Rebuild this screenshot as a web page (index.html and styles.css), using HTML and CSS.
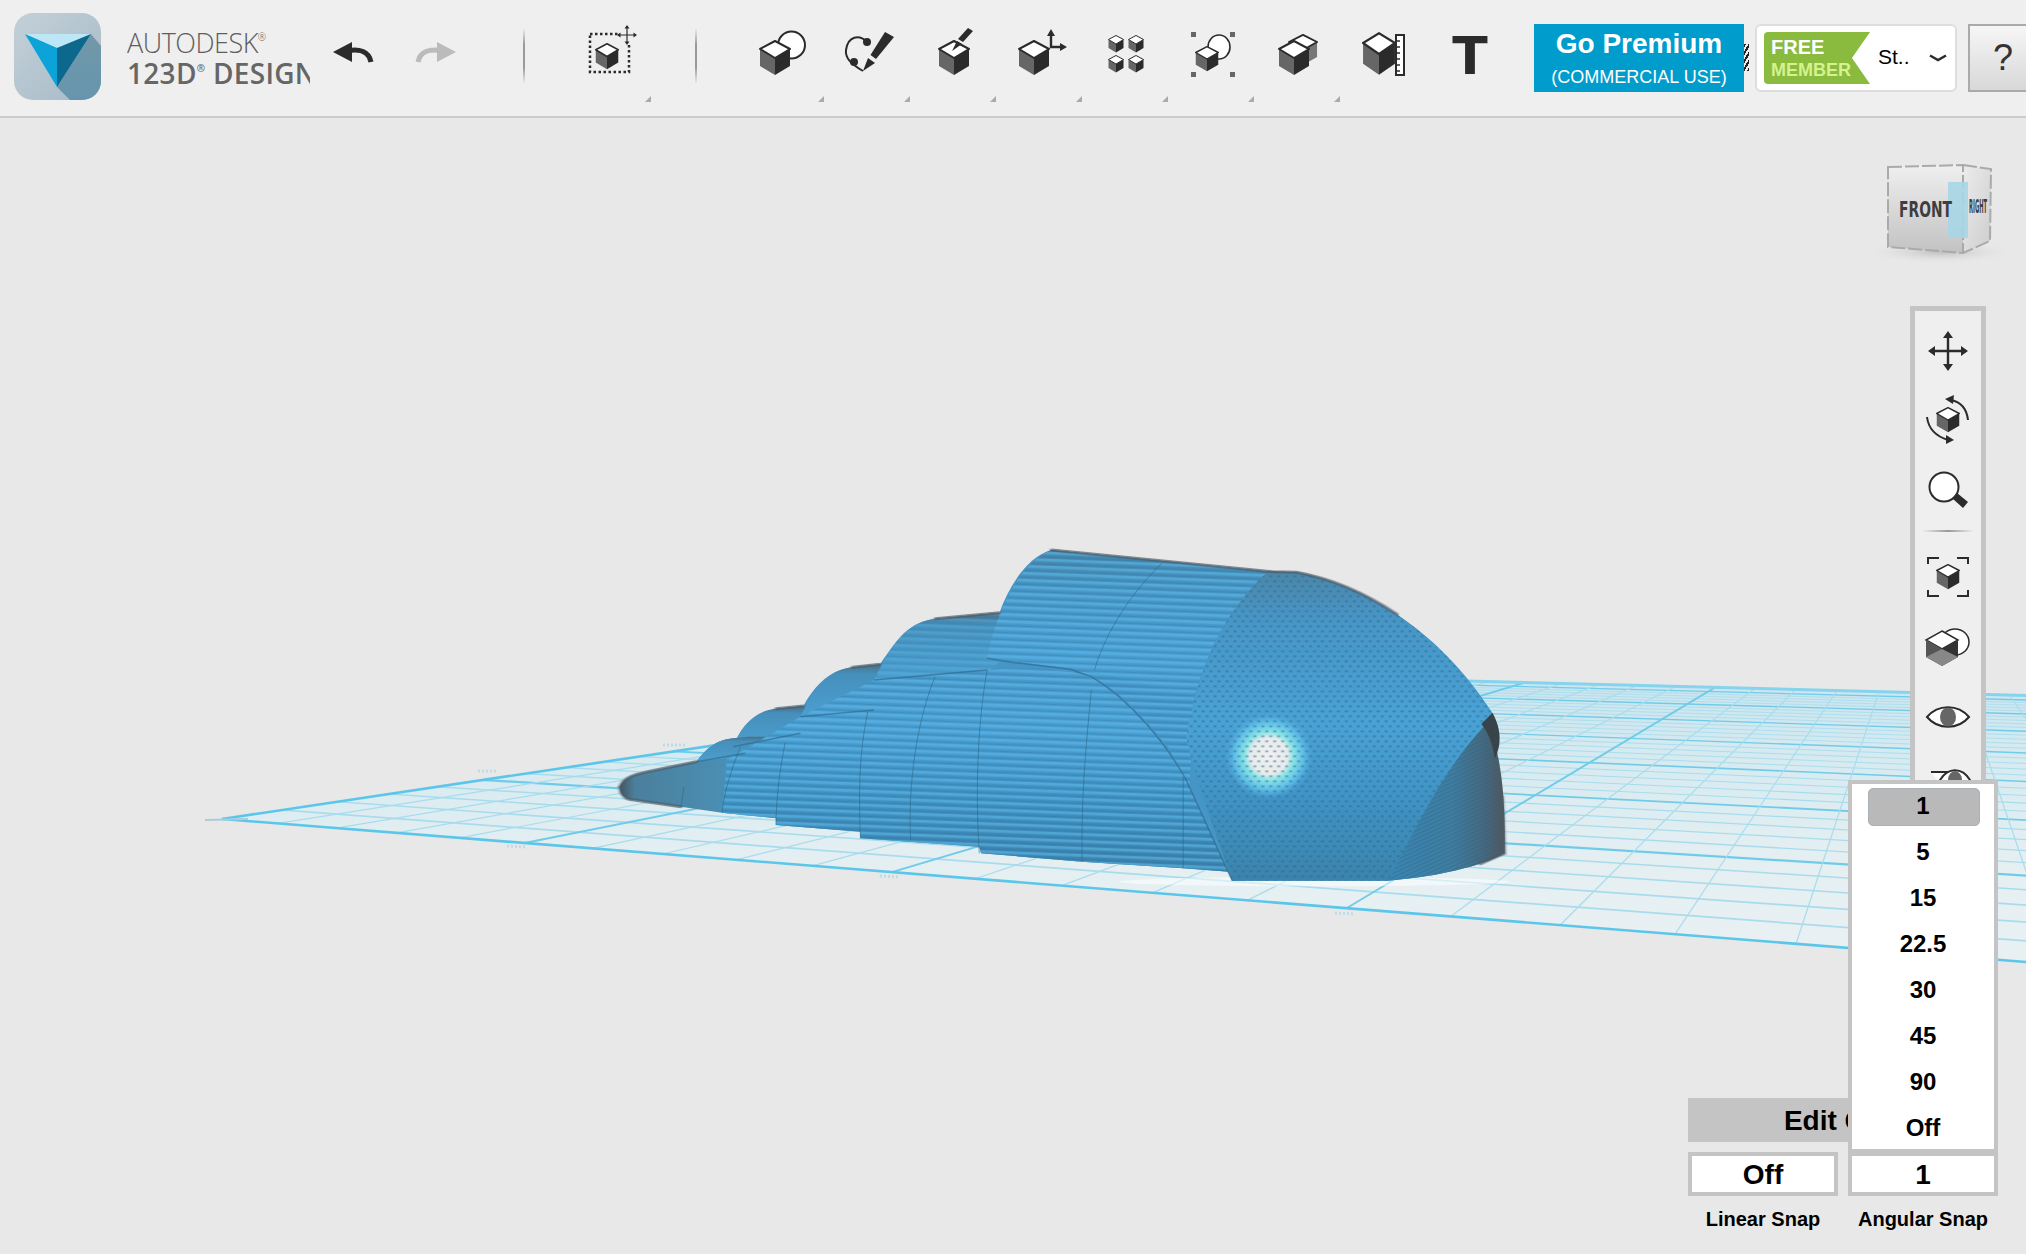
FILE: index.html
```html
<!DOCTYPE html>
<html lang="en">
<head>
<meta charset="utf-8">
<title>Autodesk 123D Design</title>
<link rel="stylesheet" href="styles.css">
</head>
<body>
<svg class="defs" width="0" height="0" aria-hidden="true">
  <defs>
    <symbol id="cube" viewBox="0 0 32 36" preserveAspectRatio="none">
      <polygon points="1,9 16,18 16,35 1,26" fill="#666"/>
      <polygon points="31,9 16,18 16,35 31,26" fill="#2b2b2b"/>
      <polygon points="16,1 31,9 16,18 1,9" fill="#fff" stroke="#2b2b2b" stroke-width="2" stroke-linejoin="round"/>
    </symbol>
    <symbol id="cube-back" viewBox="0 0 32 36" preserveAspectRatio="none">
      <polygon points="1,9 16,18 16,35 1,26" fill="#666"/>
      <polygon points="31,9 16,18 16,35 31,26" fill="#777"/>
      <polygon points="16,1 31,9 16,18 1,9" fill="#fff" stroke="#2b2b2b" stroke-width="2" stroke-linejoin="round"/>
    </symbol>
    <symbol id="cross" viewBox="0 0 40 40">
      <path d="M20 3V37M3 20H37" stroke="#2b2b2b" stroke-width="2.4" fill="none"/>
      <path d="M20 0l-5 7h10zM20 40l-5-7h10zM0 20l7-5v10zM40 20l-7-5v10z" fill="#2b2b2b"/>
    </symbol>
  </defs>
</svg>

<header class="toolbar">
  <svg class="logo" viewBox="0 0 87 87">
    <defs>
      <linearGradient id="logoBg" x1="0" y1="0" x2="1" y2="1">
        <stop offset="0" stop-color="#c3d0d8"/><stop offset="1" stop-color="#a6bac7"/>
      </linearGradient>
      <linearGradient id="logoShade" x1="0" y1="0" x2="0" y2="1">
        <stop offset="0" stop-color="#7398a9"/><stop offset="1" stop-color="#6595ad"/>
      </linearGradient>
      <clipPath id="logoClip"><rect width="87" height="87" rx="19"/></clipPath>
    </defs>
    <rect width="87" height="87" rx="19" fill="url(#logoBg)"/>
    <polygon clip-path="url(#logoClip)" points="77,21 87,33 87,87 56,87 43,74" fill="url(#logoShade)"/>
    <polygon points="11,21 77,21 43,35" fill="#bde6f6"/>
    <polygon points="11,21 43,35 43,74" fill="#0ba3d8"/>
    <polygon points="77,21 43,35 43,74" fill="#0c688c"/>
  </svg>
  <div class="brand">
    <div class="brand-top">AUTODESK<sup>®</sup></div>
    <div class="brand-bottom">123D<sup>®</sup> DESIGN</div>
  </div>

  <button class="hist hist-undo" aria-label="Undo">
    <svg width="44" height="24" viewBox="0 0 44 24"><polygon points="2,12 21,2 21,22" fill="#2b2b2b"/><path d="M18 10.5C28 9 38 11 40 22" stroke="#2b2b2b" stroke-width="5" fill="none"/></svg>
  </button>
  <button class="hist hist-redo" aria-label="Redo">
    <svg class="flip" width="44" height="24" viewBox="0 0 44 24"><polygon points="2,12 21,2 21,22" fill="#bbb"/><path d="M18 10.5C28 9 38 11 40 22" stroke="#bbb" stroke-width="5" fill="none"/></svg>
  </button>
  <span class="sep sep-a"></span>

  <button class="tool tool-select" aria-label="Transform">
    <svg class="tool-icon" viewBox="0 0 70 64">
      <rect x="16" y="10" width="39" height="38" fill="none" stroke="#2b2b2b" stroke-width="2.5" stroke-dasharray="2.5 2.5"/>
      <use href="#cube" x="21" y="19" width="24" height="27"/>
      <rect x="44" y="3" width="18" height="17" fill="#efefef"/>
      <use href="#cross" x="43" y="1" width="20" height="20"/>
    </svg>
    <i class="corner"></i>
  </button>
  <span class="sep sep-b"></span>

  <button class="tool tool-first" aria-label="Primitives">
    <svg class="tool-icon" viewBox="0 0 70 64">
      <ellipse cx="44.5" cy="21" rx="13.5" ry="13.5" fill="#fff" stroke="#2b2b2b" stroke-width="2"/>
      <use href="#cube" x="12" y="16" width="32" height="36"/>
    </svg>
    <i class="corner"></i>
  </button>
  <button class="tool" aria-label="Sketch">
    <svg class="tool-icon" viewBox="0 0 70 64">
      <path d="M34 18C26 10 15 12 13 26C12 34 18 40 30 47" fill="none" stroke="#2b2b2b" stroke-width="2"/>
      <circle cx="34" cy="18" r="4" fill="#2b2b2b"/><circle cx="21" cy="38" r="4" fill="#2b2b2b"/>
      <polygon points="52,8 61,13 43,35 37.500,31" fill="#2b2b2b"/>
      <polygon points="35,34 42,39 30,47" fill="#2b2b2b"/>
    </svg>
    <i class="corner"></i>
  </button>
  <button class="tool" aria-label="Construct">
    <svg class="tool-icon" viewBox="0 0 70 64">
      <use href="#cube" x="19" y="16" width="32" height="36"/>
      <polygon points="49,4 54,7 44,18 39,15" fill="#2b2b2b"/>
      <polygon points="38,17 43,20 33,27" fill="#2b2b2b"/>
    </svg>
    <i class="corner"></i>
  </button>
  <button class="tool" aria-label="Modify">
    <svg class="tool-icon" viewBox="0 0 70 64">
      <use href="#cube" x="13" y="16" width="32" height="36"/>
      <path d="M46 10V23H56" fill="none" stroke="#2b2b2b" stroke-width="2.4"/>
      <polygon points="46,5 42,12 50,12" fill="#2b2b2b"/>
      <polygon points="62,23 55,19 55,27" fill="#2b2b2b"/>
    </svg>
    <i class="corner"></i>
  </button>
  <button class="tool" aria-label="Pattern">
    <svg class="tool-icon" viewBox="0 0 70 64">
      <use href="#cube" x="17" y="11" width="16" height="18"/>
      <use href="#cube" x="37" y="11" width="16" height="18"/>
      <use href="#cube" x="17" y="31" width="16" height="18"/>
      <use href="#cube" x="37" y="31" width="16" height="18"/>
    </svg>
    <i class="corner"></i>
  </button>
  <button class="tool" aria-label="Group">
    <svg class="tool-icon" viewBox="0 0 70 64">
      <ellipse cx="42" cy="23" rx="11" ry="12" fill="#fff" stroke="#2b2b2b" stroke-width="1.6"/>
      <use href="#cube" x="18" y="22" width="24" height="26"/>
      <rect x="14" y="8" width="5" height="5" fill="#666"/><rect x="53" y="8" width="5" height="5" fill="#666"/>
      <rect x="14" y="48" width="5" height="5" fill="#666"/><rect x="53" y="48" width="5" height="5" fill="#666"/>
    </svg>
    <i class="corner"></i>
  </button>
  <button class="tool" aria-label="Combine">
    <svg class="tool-icon" viewBox="0 0 70 64">
      <use href="#cube-back" x="25" y="10" width="30" height="32"/>
      <use href="#cube" x="15" y="16" width="32" height="36"/>
    </svg>
    <i class="corner"></i>
  </button>
  <button class="tool" aria-label="Measure">
    <svg class="tool-icon" viewBox="0 0 70 64">
      <use href="#cube" x="13" y="8" width="34" height="44"/>
      <rect x="47" y="11" width="8" height="40" fill="#fff" stroke="#2b2b2b" stroke-width="2"/>
      <path d="M47 17h4M47 23h4M47 29h4M47 35h4M47 41h4M47 47h4" stroke="#2b2b2b" stroke-width="1.600"/>
    </svg>
  </button>
  <div class="tool tool-text">T</div>

  <a class="premium">
    <span class="premium-main">Go Premium</span>
    <span class="premium-sub">(COMMERCIAL USE)</span>
  </a>
  <span class="hatch"></span>
  <div class="member">
    <div class="ribbon"><span class="ribbon-free">FREE</span><span class="ribbon-member">MEMBER</span></div>
    <span class="member-name">St..</span>
    <svg class="chevron" width="18" height="8" viewBox="0 0 18 8"><path d="M1 1.500L9 6L17 1.500" fill="none" stroke="#2b2b2b" stroke-width="2.500"/></svg>
  </div>
  <button class="help">?</button>
</header>

<main class="stage">
  <svg class="scene" viewBox="0 118 2026 1136">
    <defs>
      <clipPath id="planeClip"><polygon points="222,819 1191,674 2026,695.400 2026,962"/></clipPath>
      <linearGradient id="planeFill" gradientUnits="userSpaceOnUse" x1="0" y1="680" x2="0" y2="940">
        <stop offset="0" stop-color="#cbe5ef"/><stop offset=".35" stop-color="#d8ebf1"/><stop offset=".7" stop-color="#e5eff2"/><stop offset="1" stop-color="#e8f0f2"/>
      </linearGradient>

      <linearGradient id="noseFill" x1="0" y1="0" x2="1" y2="0">
        <stop offset="0" stop-color="#45555f"/><stop offset=".14" stop-color="#4b7f9c"/><stop offset="1" stop-color="#4a8fb4"/>
      </linearGradient>
      <linearGradient id="bumpFill" x1="0" y1="0" x2="0" y2="1">
        <stop offset="0" stop-color="#4a6f86"/><stop offset=".18" stop-color="#468fbb"/><stop offset="1" stop-color="#4b9fd0"/>
      </linearGradient>
      <linearGradient id="bandFill" x1="0" y1="0" x2="0" y2="1">
        <stop offset="0" stop-color="#4485ab"/><stop offset=".25" stop-color="#4795c3"/><stop offset=".7" stop-color="#4a9fd2"/><stop offset="1" stop-color="#4595c6"/>
      </linearGradient>
      <linearGradient id="frontFill" gradientUnits="userSpaceOnUse" x1="0" y1="440" x2="0" y2="1080">
        <stop offset="0" stop-color="#4898c8"/><stop offset=".28" stop-color="#4a9fd2"/><stop offset=".6" stop-color="#4092c2"/><stop offset="1" stop-color="#3b80a9"/>
      </linearGradient>
      <linearGradient id="domeFill" x1="0" y1="0" x2="0" y2="1">
        <stop offset="0" stop-color="#4b86a8"/><stop offset=".15" stop-color="#4795c5"/><stop offset=".5" stop-color="#49a2d6"/><stop offset=".75" stop-color="#3f92c3"/><stop offset="1" stop-color="#3b84ad"/>
      </linearGradient>
      <linearGradient id="wedgeFill" x1="0" y1="0" x2="1" y2="0">
        <stop offset="0" stop-color="#3a86b3"/><stop offset=".55" stop-color="#3f7da0"/><stop offset=".85" stop-color="#46667a"/><stop offset="1" stop-color="#53565a"/>
      </linearGradient>
      <radialGradient id="spot">
        <stop offset="0" stop-color="#f0f0f0"/><stop offset=".42" stop-color="#e8ebeb"/><stop offset=".56" stop-color="#86e3e6"/><stop offset=".78" stop-color="#5fbfe6"/><stop offset="1" stop-color="#4fa8dc" stop-opacity="0"/>
      </radialGradient>
      <radialGradient id="cubeShadow">
        <stop offset="0" stop-color="#bbb" stop-opacity=".9"/><stop offset="1" stop-color="#e8e8e8" stop-opacity="0"/>
      </radialGradient>
      <linearGradient id="cubeFace" x1="0" y1="0" x2="0" y2="1">
        <stop offset="0" stop-color="#efefef"/><stop offset="1" stop-color="#c2c2c2"/>
      </linearGradient>
      <linearGradient id="cubeSide" x1="0" y1="0" x2="1" y2="1">
        <stop offset="0" stop-color="#ececec"/><stop offset="1" stop-color="#cdcdcd"/>
      </linearGradient>

      <pattern id="stripes" patternUnits="userSpaceOnUse" width="400" height="21" patternTransform="skewY(4)">
        <rect y="0" width="400" height="8" fill="#5cb8e8" fill-opacity=".6"/>
        <rect y="14" width="400" height="4" fill="#2c6f99" fill-opacity=".3"/>
      </pattern>
      <pattern id="dots" patternUnits="userSpaceOnUse" width="13" height="30">
        <rect x="1" y="1" width="5" height="6" fill="#2b6486" fill-opacity=".48"/>
        <rect x="7.500" y="16" width="5" height="6" fill="#2b6486" fill-opacity=".48"/>
      </pattern>
      <pattern id="diag" patternUnits="userSpaceOnUse" width="8" height="12" patternTransform="skewY(-40)">
        <rect width="8" height="4" fill="#2c5f80" fill-opacity=".35"/>
      </pattern>
      <filter id="soft" x="-5%" y="-5%" width="110%" height="110%"><feGaussianBlur stdDeviation="2 1"/></filter>
    </defs>

    <polygon points="222,819 1191,674 2026,695.400 2026,962" fill="url(#planeFill)"/>
    <g id="grid" clip-path="url(#planeClip)"></g>
    <path class="edge-near" d="M222 819L1191 674"/>
    <path class="edge-far" d="M1191 674L2026 695.400"/>
    <path class="edge-near" d="M222 819L2026 962"/>
    <path class="edge-tip" d="M205 820L248 819"/>
    <path class="tick" d="M507 846L527 847M880 876L900 877M1335 913L1355 914M478 771L498 771M663 745L685 745"/>

    <g transform="matrix(.61237 0 0 .33333 580 520)">
      <ellipse cx="1200" cy="1085" rx="320" ry="14" fill="#fff" fill-opacity=".5"/>

      <path d="M190 725C205 690 220 660 250 655L275 650C285 600 300 572 320 566L365 558C385 490 410 450 445 442L490 433C520 350 540 305 580 296L685 278C700 200 730 110 770 90L1130 155L1170 157C1270 190 1400 320 1490 580L1510 1000C1470 1040 1400 1070 1320 1082L1065 1082L1060 1055L985 1045L820 1025L655 1000L652 980L458 955L458 935L320 915L320 895L232 878Z" fill="#4595c6"/>

      <path d="M250 680C262 620 285 572 320 566L365 558L385 620L360 650Z" fill="url(#bumpFill)"/>
      <path d="M190 725C205 690 220 660 250 655L275 650L330 650L330 700L240 730Z" fill="url(#bumpFill)"/>
      <path d="M360 590C385 500 405 450 445 442L490 433L520 500L480 570Z" fill="url(#bumpFill)"/>
      <path d="M480 480C510 370 530 310 580 296L685 278L700 400L670 450Z" fill="url(#bumpFill)"/>
      <path d="M480 480C510 370 530 310 580 296L685 278L700 400L670 450Z" fill="url(#stripes)" fill-opacity=".55"/>

      <path d="M665 410C680 280 715 130 770 90L1130 155C1060 250 1020 400 1000 560C950 500 880 470 800 445L665 415Z" fill="url(#bandFill)"/>
      <path d="M665 410C680 280 715 130 770 90L1130 155C1060 250 1020 400 1000 560C950 500 880 470 800 445L665 415Z" fill="url(#stripes)"/>
      <path d="M800 445C880 470 950 500 1005 545L995 800L960 680C920 590 880 510 835 470Z" fill="#4596c8"/>
      <path d="M800 445C880 470 950 500 1005 545L995 800L960 680C920 590 880 510 835 470Z" fill="url(#stripes)"/>

      <path d="M1125 153L1170 157C1270 190 1400 320 1490 580C1440 700 1370 900 1320 1082L1065 1082C1040 950 1000 750 990 650C1010 450 1050 270 1125 153Z" fill="url(#domeFill)"/>
      <ellipse cx="1125" cy="708" rx="72" ry="130" fill="url(#spot)"/>
      <path d="M1125 153L1170 157C1270 190 1400 320 1490 580C1440 700 1370 900 1320 1082L1065 1082C1040 950 1000 750 990 650C1010 450 1050 270 1125 153Z" fill="url(#dots)"/>

      <path d="M1320 1082C1370 900 1420 720 1482 610C1500 680 1512 800 1510 1000C1470 1040 1400 1070 1320 1082Z" fill="url(#wedgeFill)"/>
      <path d="M1320 1082C1370 900 1420 720 1482 610C1500 680 1512 800 1510 1000C1470 1040 1400 1070 1320 1082Z" fill="url(#diag)"/>
      <path d="M1472 612L1490 578C1506 630 1504 680 1494 715C1490 670 1484 640 1472 612Z" fill="#39434a"/>

      <path d="M65 800C70 775 85 765 110 755L190 725L240 715L232 878L165 860L80 838C68 830 65 815 65 800Z" fill="url(#noseFill)"/>

      <path d="M835 470C900 540 960 680 990 780L1065 1082L1060 1055L985 1045L820 1025L655 1000L652 980L458 955L458 935L320 915L320 895L232 878L240 720L360 590L480 480L670 450C730 440 790 445 835 470Z" fill="url(#frontFill)"/>
      <path d="M835 470C900 540 960 680 990 780L1065 1082L1060 1055L985 1045L820 1025L655 1000L652 980L458 955L458 935L320 915L320 895L232 878L240 720L360 590L480 480L670 450C730 440 790 445 835 470Z" fill="url(#stripes)"/>

      <g class="seams">
        <path d="M170 800L165 860"/>
        <path d="M262 680C245 760 235 820 232 878"/>
        <path d="M335 668C325 760 320 850 320 915"/>
        <path d="M470 575C455 700 455 830 458 955"/>
        <path d="M580 470C550 600 535 800 540 960"/>
        <path d="M665 450C650 600 645 800 652 1000"/>
        <path d="M835 510C825 700 818 850 820 1025"/>
        <path d="M985 770L985 1045"/>
        <path d="M950 130C900 220 860 330 840 450"/>
      </g>
      <g class="creases">
        <path d="M665 415L710 428L800 448L835 470"/>
        <path d="M190 725L270 700"/>
        <path d="M250 680L360 640"/>
        <path d="M360 590L480 570"/>
        <path d="M480 480L665 450"/>
        <path d="M835 470C900 540 960 680 990 780L1065 1082"/>
      </g>
      <g class="rims" filter="url(#soft)">
        <path d="M770 90L1130 155L1170 157C1220 173.500 1277.500 214 1334 283"/>
        <path d="M580 296L685 278"/>
        <path d="M445 442L490 433"/>
        <path d="M320 566L365 558"/>
        <path d="M65 800C70 775 85 765 110 755L190 725"/>
        <path d="M65 800C65 815 68 830 80 838L165 860"/>
        <path d="M1506 830L1510 1000L1470 1032"/>
      </g>
    </g>

    <g class="viewcube">
      <ellipse cx="1940" cy="252" rx="78" ry="12" fill="url(#cubeShadow)"/>
      <polygon points="1888,167 1963,165 1963,253 1888,247" fill="url(#cubeFace)"/>
      <polygon points="1963,165 1991,169 1990,241 1963,253" fill="url(#cubeSide)"/>
      <path class="cube-edge" d="M1888 167L1963 165L1963 253L1888 247ZM1963 165L1991 169L1990 241L1963 253"/>
      <rect x="1948" y="182" width="20" height="56" fill="#a9d6e6" fill-opacity=".9"/>
      <text class="cube-front" x="1899" y="217" textLength="53" lengthAdjust="spacingAndGlyphs">FRONT</text>
      <text class="cube-right" x="1969" y="213" textLength="18" lengthAdjust="spacingAndGlyphs">RIGHT</text>
    </g>
  </svg>

  <aside class="nav-panel">
    <div class="nav-item">
      <svg width="60" height="60" viewBox="0 0 60 60"><use href="#cross" x="10" y="10" width="40" height="40"/></svg>
    </div>
    <div class="nav-item">
      <svg width="60" height="60" viewBox="0 0 60 60">
        <use href="#cube" x="18" y="17" width="24" height="26"/>
        <path d="M33 10Q48 13 50 30M9 27Q11 44 30 50" fill="none" stroke="#2b2b2b" stroke-width="2"/>
        <polygon points="27,9 36,5 35,14" fill="#2b2b2b"/>
        <polygon points="36,50 28,45 28,54" fill="#2b2b2b"/>
      </svg>
    </div>
    <div class="nav-item">
      <svg width="60" height="60" viewBox="0 0 60 60">
        <circle cx="26" cy="28" r="14.500" fill="#fff" stroke="#2b2b2b" stroke-width="2"/>
        <polygon points="35,40 39,34 50,43 45,49" fill="#2b2b2b"/>
      </svg>
    </div>
    <div class="nav-sep"></div>
    <div class="nav-item nav-item-low">
      <svg width="60" height="60" viewBox="0 0 60 60">
        <path d="M10 17V11H21M39 11H50V17M10 43V49H21M39 49H50V43" fill="none" stroke="#2b2b2b" stroke-width="2"/>
        <use href="#cube" x="18" y="17" width="24" height="26"/>
      </svg>
    </div>
    <div class="nav-item nav-item-low">
      <svg width="60" height="60" viewBox="0 0 60 60">
        <ellipse cx="37" cy="25" rx="14" ry="13" fill="#fff" stroke="#2b2b2b" stroke-width="1.500"/>
        <polygon points="24,14 40,23 24,32 8,23" fill="#fff" stroke="#2b2b2b" stroke-width="1.500"/>
        <polygon points="8,23 24,32 24,49 8,40" fill="#555"/>
        <polygon points="40,23 24,32 24,49 40,40" fill="#333"/>
        <polygon points="8,40 24,32 40,40 24,49" fill="#888"/>
      </svg>
    </div>
    <div class="nav-item nav-item-low">
      <svg width="60" height="60" viewBox="0 0 60 60">
        <path d="M9 30C20 17 40 17 51 30C40 43 20 43 9 30Z" fill="#fff" stroke="#2b2b2b" stroke-width="2"/>
        <ellipse cx="30" cy="30" rx="8" ry="9.500" fill="#666"/>
      </svg>
    </div>
    <div class="nav-item nav-item-low">
      <svg width="60" height="60" viewBox="0 0 60 60">
        <path d="M13 15H30L24 29" fill="#fff" stroke="#2b2b2b" stroke-width="2"/>
        <path d="M22 23C30 10 44 10 52 23C44 36 30 36 22 23Z" fill="#fff" stroke="#2b2b2b" stroke-width="2"/>
        <ellipse cx="37" cy="23" rx="7" ry="9" fill="#666"/>
      </svg>
    </div>
  </aside>

  <section class="snap">
    <div class="snap-title">Edit Grid</div>
    <div class="snap-row">
      <div class="snap-col"><div class="snap-value">Off</div><div class="snap-label">Linear Snap</div></div>
      <div class="snap-col"><div class="snap-value">1</div><div class="snap-label">Angular Snap</div></div>
    </div>
    <ul class="snap-menu">
      <li class="snap-opt snap-opt-on">1</li>
      <li class="snap-opt">5</li>
      <li class="snap-opt">15</li>
      <li class="snap-opt">22.5</li>
      <li class="snap-opt">30</li>
      <li class="snap-opt">45</li>
      <li class="snap-opt">90</li>
      <li class="snap-opt">Off</li>
    </ul>
  </section>
</main>
<script src="scene.js"></script>
</body>
</html>
```

FILE: styles.css
```css
* { box-sizing: border-box; }
html, body { margin: 0; padding: 0; }
body {
  width: 2026px;
  height: 1254px;
  overflow: hidden;
  display: flex;
  flex-direction: column;
  background: #e8e8e8;
  font-family: "Liberation Sans", Arial, sans-serif;
  color: #000;
}
.defs { position: absolute; }
button { border: 0; padding: 0; background: none; font: inherit; }

.toolbar {
  flex: 0 0 118px;
  display: flex;
  align-items: center;
  height: 118px;
  padding-left: 14px;
  background: #efefef;
  border-bottom: 2px solid #ccc;
  overflow: hidden;
}
.logo { flex: 0 0 87px; width: 87px; height: 87px; margin-bottom: 3px; }
.brand {
  flex: 0 0 183px;
  width: 183px;
  margin-left: 26px;
  margin-bottom: 1px;
  overflow: hidden;
  white-space: nowrap;
  font-family: "Open Sans", sans-serif;
  color: #666;
  line-height: 31px;
}
.brand sup { font-size: 10px; line-height: 0; vertical-align: 12px; }
.brand-top { font-size: 27px; font-weight: 300; letter-spacing: -.5px; color: #5e5e5e; }
.brand-bottom { font-size: 28px; font-weight: 600; letter-spacing: .3px; }

.hist { display: flex; justify-content: center; height: 24px; margin-bottom: 12px; }
.hist-undo { flex: 0 0 86px; }
.hist-redo { flex: 0 0 80px; }
.flip { transform: scaleX(-1); }

.sep {
  flex: 0 0 2px;
  height: 56px;
  margin-bottom: 4px;
  background: linear-gradient(#efefef, #999 30%, #999 70%, #efefef);
}
.sep-a { margin-left: 47px; }
.sep-b { margin-left: 43px; }

.tool {
  position: relative;
  flex: 0 0 86px;
  display: flex;
  justify-content: center;
  align-items: center;
  height: 116px;
}
.tool-select { margin-left: 41px; }
.tool-first { margin-left: 42px; }
.tool-icon { width: 70px; height: 64px; margin-bottom: 4px; }
.corner {
  position: absolute;
  right: 1px;
  top: 96px;
  width: 0;
  height: 0;
  border-left: 6px solid transparent;
  border-bottom: 6px solid #aaa;
}
.tool-text {
  font-family: "DejaVu Sans", sans-serif;
  font-size: 52px;
  font-weight: 700;
  color: #2b2b2b;
  padding-bottom: 4px;
}

.premium {
  flex: 0 0 210px;
  width: 210px;
  height: 68px;
  margin-left: 21px;
  display: flex;
  flex-direction: column;
  align-items: center;
  background: #009ccc;
  color: #fff;
}
.premium-main { font-size: 28px; font-weight: 700; line-height: 32px; margin-top: 4px; }
.premium-sub { font-size: 18px; line-height: 22px; margin-top: 6px; }
.hatch {
  flex: 0 0 5px;
  height: 27px;
  margin-bottom: 2px;
  background: repeating-linear-gradient(-60deg, #222 0 2px, #eee 2px 4px);
}
.member {
  flex: 0 0 202px;
  width: 202px;
  height: 68px;
  margin-left: 6px;
  display: flex;
  align-items: center;
  padding-left: 7px;
  background: #fff;
  border: 2px solid #ddd;
  border-radius: 6px;
}
.ribbon {
  flex: 0 0 106px;
  width: 106px;
  height: 52px;
  display: flex;
  flex-direction: column;
  padding-left: 7px;
  background: #8abb3f;
  border-radius: 4px 0 0 4px;
  clip-path: polygon(0 0, 100% 0, 83% 50%, 100% 100%, 0 100%);
  font-weight: 700;
}
.ribbon-free { font-size: 20px; line-height: 24px; color: #fff; margin-top: 3px; }
.ribbon-member { font-size: 18px; line-height: 22px; color: #d4f28e; }
.member-name { font-size: 21px; margin-left: 8px; margin-bottom: 2px; }
.chevron { margin-left: 19px; }
.help {
  flex: 0 0 70px;
  height: 68px;
  margin-left: 11px;
  border: 2px solid #aaa;
  background: linear-gradient(#f6f6f6, #d8d8d8);
  font-size: 36px;
  color: #333;
}

.stage { position: relative; flex: 1 1 auto; overflow: hidden; }
.scene { position: absolute; left: 0; top: 0; width: 2026px; height: 1136px; }

.grid-major { stroke: #70cbe9; }
.grid-minor { stroke: #a8dcec; }
.edge-near { fill: none; stroke: #5cc6ea; stroke-width: 2.6; }
.edge-far { fill: none; stroke: #86d3ee; stroke-width: 3; }
.edge-tip { fill: none; stroke: #a9ccd9; stroke-width: 2; }
.tick { fill: none; stroke: #bcdde8; stroke-width: 3; stroke-dasharray: 2 2; }

.seams path { fill: none; stroke: #2a6285; stroke-opacity: .55; stroke-width: 1; vector-effect: non-scaling-stroke; }
.creases path { fill: none; stroke: #2f6487; stroke-opacity: .6; stroke-width: 1.5; vector-effect: non-scaling-stroke; }
.rims path { fill: none; stroke: #4b5d69; stroke-opacity: .7; stroke-width: 3; stroke-linecap: round; vector-effect: non-scaling-stroke; }

.cube-edge { fill: none; stroke: #aaa; stroke-width: 2; stroke-dasharray: 14 3; }
.cube-front { font-family: "DejaVu Sans", sans-serif; font-size: 22px; font-weight: 700; fill: #3e3e3e; }
.cube-right { font-family: "DejaVu Sans", sans-serif; font-size: 20px; font-weight: 700; fill: #3e3e3e; }

.nav-panel {
  position: absolute;
  left: 1910px;
  top: 188px;
  width: 76px;
  height: 500px;
  padding-top: 5px;
  background: #efefef;
  border: 5px solid #c4c4c4;
  display: flex;
  flex-direction: column;
  align-items: center;
}
.nav-item { flex: 0 0 69px; display: flex; align-items: center; justify-content: center; }
.nav-item-low { flex-basis: 70px; }
.nav-sep {
  flex: 0 0 2px;
  width: 52px;
  margin: 7px 0 10px;
  background: linear-gradient(90deg, #efefef, #999 50%, #efefef);
}

.snap {
  position: absolute;
  left: 1688px;
  top: 980px;
  width: 310px;
  font-weight: 700;
}
.snap-title {
  height: 44px;
  margin-bottom: 10px;
  background: #c4c4c4;
  font-size: 28px;
  line-height: 46px;
  text-align: center;
}
.snap-row { display: flex; gap: 10px; }
.snap-col { flex: 0 0 150px; text-align: center; }
.snap-value {
  height: 44px;
  border: 4px solid #c4c4c4;
  background: #fff;
  font-size: 28px;
  line-height: 37px;
}
.snap-label { font-size: 20px; line-height: 24px; margin-top: 11px; }
.snap-menu {
  position: absolute;
  right: 0;
  top: -318px;
  width: 150px;
  height: 373px;
  margin: 0;
  padding: 4px 0 0;
  list-style: none;
  background: #fff;
  border: 4px solid #c4c4c4;
}
.snap-opt { height: 46px; font-size: 24px; line-height: 46px; text-align: center; }
.snap-opt-on {
  height: 38px;
  margin: 0 14px 3px 16px;
  padding-right: 2px;
  line-height: 33px;
  background: #b9b9b9;
  border: 1px solid #a8b0b8;
  border-radius: 5px;
}
```

FILE: scene.js
```js
// Draws the ground-plane grid in perspective from its two vanishing points.
(function () {
  var NS = 'http://www.w3.org/2000/svg';
  var grid = document.getElementById('grid');
  var VP_ROWS = { x: -2938, y: 568 };
  var VP_COLS = { x: 1921, y: 564 };

  function frontY(x) { return 819 + 0.0794 * (x - 222); }

  function line(x1, y1, x2, y2, major, width) {
    var el = document.createElementNS(NS, 'line');
    el.setAttribute('x1', x1);
    el.setAttribute('y1', y1);
    el.setAttribute('x2', x2);
    el.setAttribute('y2', y2);
    el.setAttribute('stroke-width', width);
    el.setAttribute('class', major ? 'grid-major' : 'grid-minor');
    grid.appendChild(el);
  }

  // Lines running along the front edge: even steps in 1/(y - horizon) at x = 1600.
  for (var n = 35; n >= 1; n--) {
    var yp = 566 + 1 / (2.762e-3 + n * 0.154e-3);
    var major = n % 5 === 0;
    var scale = Math.max(0.55, (yp - 566) / 300);
    var y = function (x, p) { return VP_ROWS.y + (p - VP_ROWS.y) * (x - VP_ROWS.x) / (1600 - VP_ROWS.x); };
    line(200, y(200, yp), 2100, y(2100, yp), major, (major ? 2.4 : 1.5) * scale);
  }

  // Lines running away from the front edge, towards the second vanishing point.
  for (var m = 1; m < 52; m++) {
    var foot = VP_ROWS.x + 1 / (3.165e-4 - 0.0554e-4 * m);
    var isMajor = m % 5 === 0;
    line(foot, frontY(foot), VP_COLS.x, VP_COLS.y, isMajor, isMajor ? 1.9 : 1.2);
  }
})();
```
